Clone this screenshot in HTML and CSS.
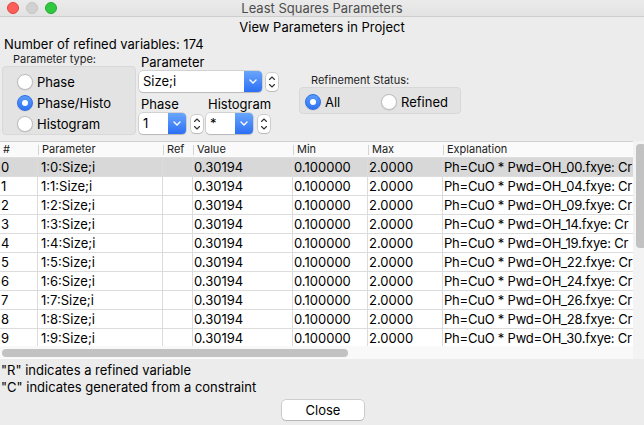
FILE: index.html
```html
<!DOCTYPE html>
<html>
<head>
<meta charset="utf-8">
<title>Least Squares Parameters</title>
<link rel="stylesheet" href="styles.css">
</head>
<body>
<div class="window">
  <div class="titlebar">
    <div class="lights"><span class="light red"></span><span class="light grey"></span><span class="light green"></span></div>
    <div class="title">Least Squares Parameters</div>
    <div></div>
  </div>
  <div class="heading">View Parameters in Project</div>
  <div class="count">Number of refined variables: 174</div>

  <div class="controls">
    <div class="ptype">
      <div class="small-label">Parameter type:</div>
      <div class="groupbox vgroup">
        <div class="radio"><span class="dot"></span>Phase</div>
        <div class="radio"><span class="dot on"></span>Phase/Histo</div>
        <div class="radio"><span class="dot"></span>Histogram</div>
      </div>
    </div>

    <div class="selectors">
      <div class="field-label">Parameter</div>
      <div class="combo-row">
        <div class="combo wide"><span class="combo-text">Size;i</span><span class="combo-arrow"><svg width="8" height="5" viewBox="0 0 8 5"><path d="M1 1 L4 4 L7 1" fill="none" stroke="#fff" stroke-width="1.4" stroke-linecap="round" stroke-linejoin="round"/></svg></span></div>
        <span class="spinner"><svg width="12" height="18" viewBox="0 0 12 18"><path d="M3.5 6.5 L6 4 L8.5 6.5" fill="none" stroke="#333" stroke-width="1.1" stroke-linecap="round" stroke-linejoin="round"/><path d="M3.5 11.5 L6 14 L8.5 11.5" fill="none" stroke="#333" stroke-width="1.1" stroke-linecap="round" stroke-linejoin="round"/></svg></span>
      </div>
      <div class="pair">
        <div class="sub">
          <div class="field-label lower">Phase</div>
          <div class="combo-row">
            <div class="combo narrow"><span class="combo-text">1</span><span class="combo-arrow"><svg width="8" height="5" viewBox="0 0 8 5"><path d="M1 1 L4 4 L7 1" fill="none" stroke="#fff" stroke-width="1.4" stroke-linecap="round" stroke-linejoin="round"/></svg></span></div>
            <span class="spinner s-phase"><svg width="12" height="18" viewBox="0 0 12 18"><path d="M3.5 6.5 L6 4 L8.5 6.5" fill="none" stroke="#333" stroke-width="1.1" stroke-linecap="round" stroke-linejoin="round"/><path d="M3.5 11.5 L6 14 L8.5 11.5" fill="none" stroke="#333" stroke-width="1.1" stroke-linecap="round" stroke-linejoin="round"/></svg></span>
          </div>
        </div>
        <div class="sub hist">
          <div class="field-label lower">Histogram</div>
          <div class="combo-row">
            <div class="combo narrow"><span class="combo-text">*</span><span class="combo-arrow"><svg width="8" height="5" viewBox="0 0 8 5"><path d="M1 1 L4 4 L7 1" fill="none" stroke="#fff" stroke-width="1.4" stroke-linecap="round" stroke-linejoin="round"/></svg></span></div>
            <span class="spinner s-hist"><svg width="12" height="18" viewBox="0 0 12 18"><path d="M3.5 6.5 L6 4 L8.5 6.5" fill="none" stroke="#333" stroke-width="1.1" stroke-linecap="round" stroke-linejoin="round"/><path d="M3.5 11.5 L6 14 L8.5 11.5" fill="none" stroke="#333" stroke-width="1.1" stroke-linecap="round" stroke-linejoin="round"/></svg></span>
          </div>
        </div>
      </div>
    </div>

    <div class="status">
      <div class="small-label">Refinement Status:</div>
      <div class="groupbox hgroup">
        <div class="radio all"><span class="dot on"></span>All</div>
        <div class="radio"><span class="dot"></span>Refined</div>
      </div>
    </div>
  </div>

  <div class="table">
    <div class="grid-area">
      <div class="thead">
        <div class="th">#</div>
        <div class="th">Parameter</div>
        <div class="th">Ref</div>
        <div class="th">Value</div>
        <div class="th">Min</div>
        <div class="th">Max</div>
        <div class="th">Explanation</div>
      </div>
      <div class="tbody">
        <div class="tr sel"><div class="td">0</div><div class="td param">1:0:Size;i</div><div class="td"></div><div class="td">0.30194</div><div class="td">0.100000</div><div class="td">2.0000</div><div class="td expl">Ph=CuO * Pwd=OH_00.fxye: Cr</div></div>
        <div class="tr"><div class="td">1</div><div class="td param">1:1:Size;i</div><div class="td"></div><div class="td">0.30194</div><div class="td">0.100000</div><div class="td">2.0000</div><div class="td expl">Ph=CuO * Pwd=OH_04.fxye: Cr</div></div>
        <div class="tr"><div class="td">2</div><div class="td param">1:2:Size;i</div><div class="td"></div><div class="td">0.30194</div><div class="td">0.100000</div><div class="td">2.0000</div><div class="td expl">Ph=CuO * Pwd=OH_09.fxye: Cr</div></div>
        <div class="tr"><div class="td">3</div><div class="td param">1:3:Size;i</div><div class="td"></div><div class="td">0.30194</div><div class="td">0.100000</div><div class="td">2.0000</div><div class="td expl">Ph=CuO * Pwd=OH_14.fxye: Cr</div></div>
        <div class="tr"><div class="td">4</div><div class="td param">1:4:Size;i</div><div class="td"></div><div class="td">0.30194</div><div class="td">0.100000</div><div class="td">2.0000</div><div class="td expl">Ph=CuO * Pwd=OH_19.fxye: Cr</div></div>
        <div class="tr"><div class="td">5</div><div class="td param">1:5:Size;i</div><div class="td"></div><div class="td">0.30194</div><div class="td">0.100000</div><div class="td">2.0000</div><div class="td expl">Ph=CuO * Pwd=OH_22.fxye: Cr</div></div>
        <div class="tr"><div class="td">6</div><div class="td param">1:6:Size;i</div><div class="td"></div><div class="td">0.30194</div><div class="td">0.100000</div><div class="td">2.0000</div><div class="td expl">Ph=CuO * Pwd=OH_24.fxye: Cr</div></div>
        <div class="tr"><div class="td">7</div><div class="td param">1:7:Size;i</div><div class="td"></div><div class="td">0.30194</div><div class="td">0.100000</div><div class="td">2.0000</div><div class="td expl">Ph=CuO * Pwd=OH_26.fxye: Cr</div></div>
        <div class="tr"><div class="td">8</div><div class="td param">1:8:Size;i</div><div class="td"></div><div class="td">0.30194</div><div class="td">0.100000</div><div class="td">2.0000</div><div class="td expl">Ph=CuO * Pwd=OH_28.fxye: Cr</div></div>
        <div class="tr"><div class="td">9</div><div class="td param">1:9:Size;i</div><div class="td"></div><div class="td">0.30194</div><div class="td">0.100000</div><div class="td">2.0000</div><div class="td expl">Ph=CuO * Pwd=OH_30.fxye: Cr</div></div>
      </div>
      <div class="hscroll"><div class="hthumb"></div></div>
    </div>
    <div class="vscroll"><div class="vthumb"></div></div>
  </div>

  <div class="notes">
    <div>"R" indicates a refined variable</div>
    <div>"C" indicates generated from a constraint</div>
  </div>
  <div class="footer"><button class="close-btn">Close</button></div>
</div>
</body>
</html>
```
FILE: styles.css
```css
* { box-sizing: border-box; }
html, body {
  margin: 0;
  padding: 0;
}
body {
  width: 644px;
  height: 425px;
  overflow: hidden;
  background: #ececec;
  font-family: Inter, "Liberation Sans", Arial, sans-serif;
  font-size: 13px;
  color: #000;
}
.window {
  width: 644px;
  height: 425px;
  overflow: hidden;
}

/* title bar */
.titlebar {
  height: 17px;
  display: grid;
  grid-template-columns: 1fr auto 1fr;
  background: linear-gradient(#ebebeb, #e3e3e3);
  border-bottom: 1px solid #cdcdcd;
}
.lights {
  display: flex;
  gap: 7px;
  padding-left: 7px;
  padding-top: 2px;
}
.light {
  width: 12px;
  height: 12px;
  border-radius: 50%;
}
.light.red { background: #fd5f58; border: 1px solid #e0463f; }
.light.grey { background: #d1d1d1; border: 1px solid #c4c4c4; }
.light.green { background: #2fc841; border: 1px solid #24a934; }
.title {
  line-height: 16px;
  color: #4d4d4d;
  font-size: 13px;
}

.heading {
  text-align: center;
  margin-top: 2px;
  line-height: 16px;
}
.count {
  padding-left: 4px;
  margin-top: 1px;
  line-height: 16px;
}

/* controls */
.controls {
  display: flex;
  align-items: flex-start;
  margin-top: 1px;
}
.small-label {
  font-size: 11px;
  line-height: 13px;
  height: 13px;
  color: #1d1d1d;
}
.ptype {
  width: 134px;
  margin-left: 2px;
}
.ptype .small-label { padding-left: 11px; }
.groupbox {
  background: #e3e3e3;
  border: 1px solid #d8d8d8;
  border-radius: 4px;
}
.vgroup {
  height: 69px;
  padding: 4px 0 0 14px;
}
.vgroup .radio { height: 21px; }
.radio {
  display: flex;
  align-items: center;
  white-space: nowrap;
}
.dot {
  width: 16px;
  height: 16px;
  border-radius: 50%;
  background: #fff;
  border: 1px solid #bdbdbd;
  box-shadow: 0 0.5px 1px rgba(0,0,0,0.12);
  margin-right: 4px;
  display: flex;
  align-items: center;
  justify-content: center;
  flex: none;
}
.dot.on {
  background: linear-gradient(#5a9bfa, #2f73f3);
  border-color: #2d6ee6;
}
.dot.on::after {
  content: "";
  width: 6px;
  height: 6px;
  border-radius: 50%;
  background: #fff;
}

.selectors {
  width: 141px;
  margin-left: 3px;
  padding-top: 1px;
}
.field-label {
  line-height: 16px;
  padding-left: 2px;
  white-space: nowrap;
}
.field-label.lower { margin-top: 4px; }
.combo-row {
  display: flex;
  align-items: center;
  margin-top: 1px;
}
.combo {
  height: 21px;
  display: flex;
  background: #fff;
  border-radius: 4px;
  box-shadow: 0 0 0 0.5px rgba(0,0,0,0.22), 0 1px 1px rgba(0,0,0,0.12);
  overflow: hidden;
}
.combo.wide { width: 123px; }
.combo.narrow { width: 47px; }
.combo-text {
  flex: 1;
  padding-left: 4px;
  line-height: 21px;
  white-space: nowrap;
}
.combo-arrow {
  width: 18px;
  background: linear-gradient(#69a6fb, #2c6ff4);
  display: flex;
  align-items: center;
  justify-content: center;
}
.spinner {
  width: 12px;
  height: 18px;
  margin-left: 4px;
  background: #fff;
  border-radius: 4px;
  box-shadow: 0 0 0 0.5px rgba(0,0,0,0.25), 0 1px 1px rgba(0,0,0,0.1);
  display: flex;
}
.spinner.s-phase { margin-left: 5px; }
.spinner.s-hist { margin-left: 5px; }
.pair {
  display: flex;
}
.sub.hist { margin-left: 3px; }

.status {
  margin-left: 19px;
  margin-top: 21px;
}
.status .small-label { padding-left: 12px; }
.hgroup {
  width: 162px;
  height: 27px;
  display: flex;
  padding: 2px 0 0 5px;
}
.hgroup .radio { height: 23px; }
.radio.all { width: 76px; }

/* table */
.table {
  margin-top: 6px;
  height: 218px;
  display: flex;
}
.grid-area {
  width: 633px;
  display: flex;
  flex-direction: column;
}
.thead, .tr {
  display: grid;
  grid-template-columns: 38px 125px 30px 100px 75px 75px 190px;
}
.thead {
  height: 17px;
  background: #fafafa;
  border-top: 1px solid #d0d0d0;
  border-bottom: 1px solid #dedede;
}
.th {
  font-size: 11px;
  line-height: 15px;
  padding-left: 4px;
  color: #222;
  position: relative;
  white-space: nowrap;
}
.th:first-child { padding-left: 3px; }
.th + .th::before {
  content: "";
  position: absolute;
  left: 0;
  top: 3px;
  height: 10px;
  border-left: 1px solid #d3d3d3;
}
.tbody {
  height: 188px;
  overflow: hidden;
  background: #fff;
}
.tr {
  height: 19px;
  border-bottom: 1px solid #dcdcdc;
}
.tr.sel { background: #d8d8d8; }
.td {
  line-height: 18px;
  padding-left: 1px;
  border-right: 1px solid #dcdcdc;
  white-space: nowrap;
  overflow: hidden;
}
.td:last-child { border-right: none; }
.td.param { padding-left: 3px; }
.td.expl { letter-spacing: -0.22px; padding-left: 1px; }
.hscroll {
  height: 13px;
  background: #f9f9f9;
  padding-top: 3px;
}
.hthumb {
  margin-left: 2px;
  width: 346px;
  height: 8px;
  border-radius: 4px;
  background: #c2c2c2;
}
.vscroll {
  width: 11px;
  background: #f3f3f3;
  padding-top: 3px;
  padding-left: 3px;
  overflow: hidden;
}
.vthumb {
  width: 10px;
  height: 104px;
  border-radius: 4px;
  background: #c2c2c2;
}

.notes {
  margin-top: 3px;
  padding-left: 1px;
  line-height: 16.5px;
}
.footer {
  display: flex;
  justify-content: center;
  margin-top: 5px;
  padding-left: 2px;
}
.close-btn {
  width: 82px;
  height: 20px;
  font-family: Inter, "Liberation Sans", Arial, sans-serif;
  font-size: 13px;
  color: #000;
  background: #fff;
  border: none;
  border-radius: 4px;
  box-shadow: 0 0 0 0.5px rgba(0,0,0,0.25), 0 1px 1px rgba(0,0,0,0.12);
  padding: 0;
}
```
